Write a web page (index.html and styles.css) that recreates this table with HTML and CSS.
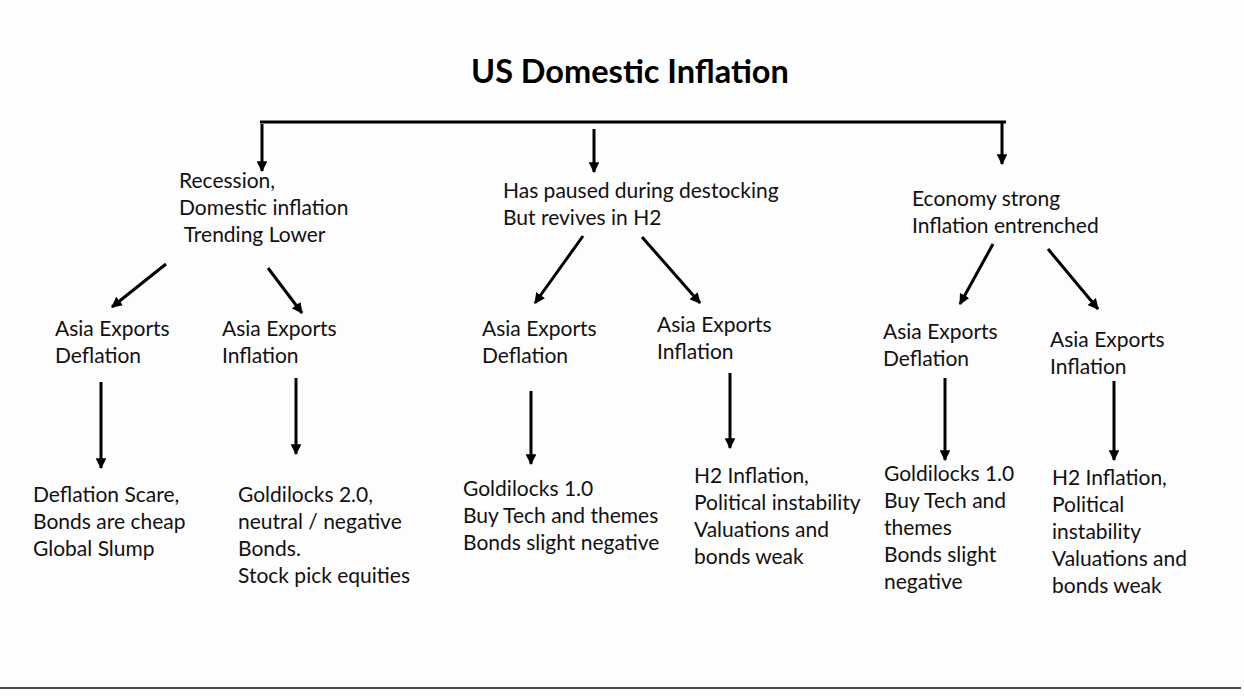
FILE: index.html
```html
<!DOCTYPE html>
<html lang="en">
<head>
<meta charset="utf-8">
<title>US Domestic Inflation</title>
<link rel="stylesheet" href="styles.css">
</head>
<body>
<div class="slide">
  <h1 class="title">US Domestic Inflation</h1>

  <svg class="wires" width="1244" height="696" viewBox="0 0 1244 696" aria-hidden="true">
    <defs>
      <marker id="head" viewBox="0 0 10 10" refX="9" refY="5" markerWidth="3.6" markerHeight="3.6" orient="auto" markerUnits="strokeWidth">
        <path d="M0 0 L10 5 L0 10 Z" fill="#000"/>
      </marker>
    </defs>
    <g stroke="#000" stroke-width="3" fill="none">
      <line x1="260" y1="122" x2="1006" y2="122"/>
      <line x1="262" y1="124" x2="262" y2="171" marker-end="url(#head)"/>
      <line x1="594" y1="129" x2="594" y2="172" marker-end="url(#head)"/>
      <line x1="1002" y1="122" x2="1002" y2="164" marker-end="url(#head)"/>

      <line x1="166" y1="264" x2="112" y2="307" marker-end="url(#head)"/>
      <line x1="268" y1="268" x2="302" y2="313" marker-end="url(#head)"/>
      <line x1="583" y1="236" x2="535" y2="303" marker-end="url(#head)"/>
      <line x1="642" y1="237" x2="700" y2="303" marker-end="url(#head)"/>
      <line x1="993" y1="244" x2="960" y2="304" marker-end="url(#head)"/>
      <line x1="1048" y1="249" x2="1098" y2="309" marker-end="url(#head)"/>

      <line x1="101" y1="382" x2="101" y2="468" marker-end="url(#head)"/>
      <line x1="296" y1="378" x2="296" y2="454" marker-end="url(#head)"/>
      <line x1="531" y1="391" x2="531" y2="464" marker-end="url(#head)"/>
      <line x1="730" y1="373" x2="730" y2="448" marker-end="url(#head)"/>
      <line x1="945" y1="378" x2="945" y2="460" marker-end="url(#head)"/>
      <line x1="1114" y1="381" x2="1114" y2="460" marker-end="url(#head)"/>
    </g>
  </svg>

  <div class="node n-rec">Recession,<br>Domestic inflation<br>&nbsp;Trending Lower</div>
  <div class="node n-paused">Has paused during destocking<br>But revives in H2</div>
  <div class="node n-strong">Economy strong<br>Inflation entrenched</div>

  <div class="node a1">Asia Exports<br>Deflation</div>
  <div class="node a2">Asia Exports<br>Inflation</div>
  <div class="node a3">Asia Exports<br>Deflation</div>
  <div class="node a4">Asia Exports<br>Inflation</div>
  <div class="node a5">Asia Exports<br>Deflation</div>
  <div class="node a6">Asia Exports<br>Inflation</div>

  <div class="node b1">Deflation Scare,<br>Bonds are cheap<br>Global Slump</div>
  <div class="node b2">Goldilocks 2.0,<br>neutral / negative<br>Bonds.<br>Stock pick equities</div>
  <div class="node b3">Goldilocks 1.0<br>Buy Tech and themes<br>Bonds slight negative</div>
  <div class="node b4">H2 Inflation,<br>Political instability<br>Valuations and<br>bonds weak</div>
  <div class="node b5">Goldilocks 1.0<br>Buy Tech and<br>themes<br>Bonds slight<br>negative</div>
  <div class="node b6">H2 Inflation,<br>Political<br>instability<br>Valuations and<br>bonds weak</div>

  <div class="rule"></div>
</div>
</body>
</html>
```

FILE: styles.css
```css
html, body {
  margin: 0;
  padding: 0;
  background: #fdfdfd;
}

.slide {
  position: relative;
  width: 1244px;
  height: 696px;
  overflow: hidden;
  font-family: Lato, "Open Sans", "Liberation Sans", sans-serif;
  color: #111;
}

.title {
  position: absolute;
  left: 471px;
  top: 51px;
  margin: 0;
  font-size: 32.5px;
  line-height: 40px;
  font-weight: 700;
  color: #000;
  white-space: nowrap;
}

.wires {
  position: absolute;
  left: 0;
  top: 0;
}

.node {
  position: absolute;
  font-size: 21px;
  line-height: 27px;
  white-space: nowrap;
}

.n-rec    { left: 179px;  top: 166px; }
.n-paused { left: 503px;  top: 176px; }
.n-strong { left: 912px;  top: 184px; }

.a1 { left: 55px;   top: 314px; }
.a2 { left: 222px;  top: 314px; }
.a3 { left: 482px;  top: 314px; }
.a4 { left: 657px;  top: 310px; }
.a5 { left: 883px;  top: 317px; }
.a6 { left: 1050px; top: 325px; }

.b1 { left: 33px;   top: 480px; }
.b2 { left: 238px;  top: 480px; }
.b3 { left: 463px;  top: 474px; }
.b4 { left: 694px;  top: 461px; }
.b5 { left: 884px;  top: 459px; }
.b6 { left: 1052px; top: 463px; }

.rule {
  position: absolute;
  left: 0;
  top: 687px;
  width: 1241px;
  height: 2px;
  background: #4a4a4a;
}
```
